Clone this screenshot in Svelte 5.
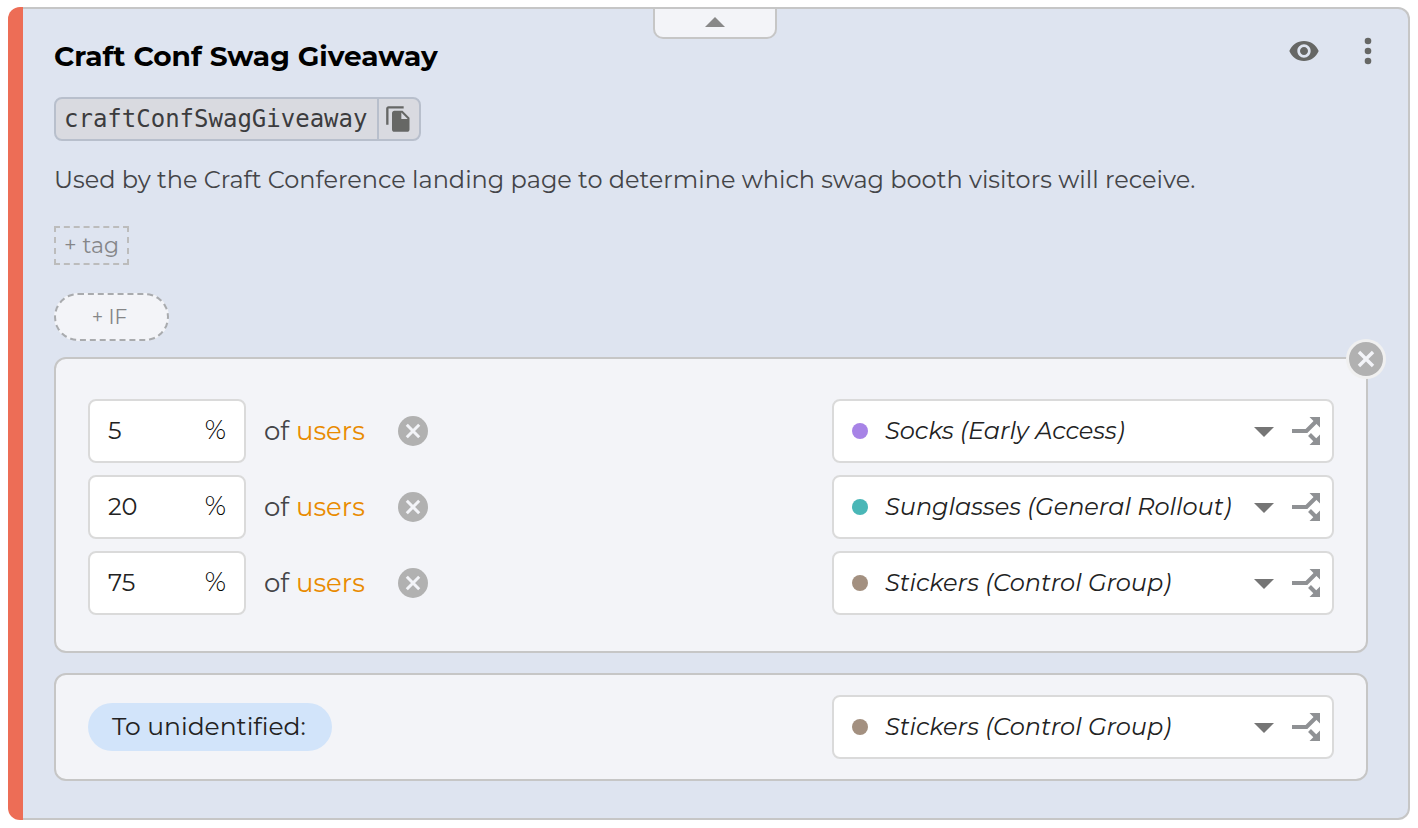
<script>
  const variants = [
    { id: 'socks', name: 'Socks (Early Access)', color: '#a783e6' },
    { id: 'sunglasses', name: 'Sunglasses (General Rollout)', color: '#4ab7b7' },
    { id: 'stickers', name: 'Stickers (Control Group)', color: '#a39080' },
  ];

  let open = $state(true);
  let hasRule = $state(true);
  let fallback = $state('stickers');
  let splits = $state([
    { percent: '5', variant: 'socks' },
    { percent: '20', variant: 'sunglasses' },
    { percent: '75', variant: 'stickers' },
  ]);

  const colorOf = (id) => variants.find((v) => v.id === id)?.color;
  const removeSplit = (i) => splits.splice(i, 1);
</script>

{#snippet cross()}
  <svg class="cross" viewBox="0 0 30 30" aria-hidden="true">
    <circle cx="15" cy="15" r="15" fill="#b1b1b1" />
    <path d="M8.8 8.8 21.2 21.2M21.2 8.8 8.8 21.2" stroke="#f3f4f8" stroke-width="3" />
  </svg>
{/snippet}

{#snippet picker(value, label, onPick)}
  <div class="picker">
    <span class="dot" style:background={colorOf(value)}></span>
    <select aria-label={label} {value} onchange={(e) => onPick(e.currentTarget.value)}>
      {#each variants as v}
        <option value={v.id}>{v.name}</option>
      {/each}
    </select>
    <button class="split" aria-label="Split variant">
      <svg width="28" height="28" viewBox="0 0 28 28">
        <path d="M0 14H14.5L24 4.5" fill="none" stroke="#8f9194" stroke-width="4" />
        <path d="M17.5 17.5 24 24" stroke="#8f9194" stroke-width="4" />
        <path d="M17.5 0H28V10.5ZM17.5 28H28V17.5Z" fill="#8f9194" />
      </svg>
    </button>
  </div>
{/snippet}

<article class="card">
  <div class="stripe"></div>
  <div class="content">
    <button class="collapse" aria-label="Collapse" aria-expanded={open} onclick={() => (open = !open)}>
      <svg width="20" height="10" viewBox="0 0 20 10"><path d="M0 10 10 0 20 10Z" fill="#888" /></svg>
    </button>

    <header>
      <h2>Craft Conf Swag Giveaway</h2>
      <div class="actions">
        <button aria-label="Watch">
          <svg width="32" height="32" viewBox="0 0 24 24" fill="#666765">
            <path d="M12 4.5C7 4.5 2.73 7.61 1 12c1.73 4.39 6 7.5 11 7.5s9.27-3.11 11-7.5c-1.73-4.39-6-7.5-11-7.5zM12 17c-2.76 0-5-2.24-5-5s2.24-5 5-5 5 2.24 5 5-2.24 5-5 5zm0-8c-1.66 0-3 1.34-3 3s1.34 3 3 3 3-1.34 3-3-1.34-3-3-3z" />
          </svg>
        </button>
        <button aria-label="More">
          <svg width="32" height="32" viewBox="0 0 32 32" fill="#666765">
            <circle cx="16" cy="6" r="3.3" />
            <circle cx="16" cy="16" r="3.3" />
            <circle cx="16" cy="26" r="3.3" />
          </svg>
        </button>
      </div>
    </header>

    <div class="key">
      <code>craftConfSwagGiveaway</code>
      <button aria-label="Copy key">
        <svg width="28" height="28" viewBox="0 0 24 24" fill="#666765">
          <path d="M16 1H3c-1.1 0-2 .9-2 2v14h2V3h13V1zm-1 4l6 6v10c0 1.1-.9 2-2 2H7.99C6.89 23 6 22.1 6 21l.01-14c0-1.1.89-2 1.99-2h7zm-1 7h5.5L14 6.5V12z" />
        </svg>
      </button>
    </div>

    {#if open}
      <p>Used by the Craft Conference landing page to determine which swag booth visitors will receive.</p>
      <button class="add-tag">+ tag</button>
      <button class="add-if">+ IF</button>

      {#if hasRule}
        <section class="panel rules">
          <button class="round close" aria-label="Remove rule" onclick={() => (hasRule = false)}>
            {@render cross()}
          </button>
          {#each splits as split, i}
            <div class="row">
              <label class="percent">
                <input bind:value={split.percent} inputmode="numeric" />
                <span>%</span>
              </label>
              <span class="of">of <a href="#users">users</a></span>
              <button class="round" aria-label="Remove split" onclick={() => removeSplit(i)}>
                {@render cross()}
              </button>
              {@render picker(split.variant, 'Variant', (v) => (split.variant = v))}
            </div>
          {/each}
        </section>
      {/if}

      <section class="panel">
        <div class="row">
          <span class="pill">To unidentified:</span>
          {@render picker(fallback, 'Variant for unidentified users', (v) => (fallback = v))}
        </div>
      </section>
    {/if}
  </div>
</article>

<style>
  :global(body) {
    background: #fff;
  }
  .card {
    display: flex;
    margin: 7px 8px 8px;
    font-family: Montserrat, Inter, sans-serif;
    font-size: 24px;
    color: #222;
  }
  button, input, select {
    font: inherit;
    color: inherit;
    margin: 0;
    padding: 0;
    border: none;
    background: none;
  }
  button {
    cursor: pointer;
  }
  svg {
    display: block;
  }
  .stripe {
    flex: none;
    width: 15px;
    background: #ed6d56;
    border-radius: 12px 0 0 12px;
  }
  .content {
    position: relative;
    flex: 1;
    min-width: 0;
    display: flex;
    flex-direction: column;
    align-items: flex-start;
    padding: 24px 40px 37px 31px;
    background: #dee4f0;
    border: 2px solid #c6c6c6;
    border-left: none;
    border-radius: 0 12px 12px 0;
  }
  .collapse {
    position: absolute;
    top: 0;
    left: calc(50% - 63px);
    width: 124px;
    height: 30px;
    display: flex;
    justify-content: center;
    padding-top: 8px;
    background: #f3f4f8;
    border: 2px solid #c6c6c6;
    border-top: none;
    border-radius: 0 0 10px 10px;
  }
  header {
    align-self: stretch;
    display: flex;
    justify-content: space-between;
    align-items: flex-start;
  }
  h2 {
    margin: 0;
    font-size: 28px;
    font-weight: 700;
    line-height: 46px;
    color: #000;
  }
  .actions {
    display: flex;
    gap: 32px;
    margin: 2px -16px 0 0;
  }
  .key {
    display: flex;
    height: 40px;
    margin-top: 18px;
    background: #d9dae0;
    border: 2px solid #b8bfcc;
    border-radius: 8px;
  }
  .key code {
    padding: 0 10px 0 8px;
    font-family: "DejaVu Sans Mono", monospace;
    font-size: 24px;
    line-height: 40px;
    color: #3c3c3e;
  }
  .key button {
    padding: 0 6px;
    border-left: 2px solid #b8bfcc;
  }
  p {
    margin: 20px 0 0;
    font-size: 24px;
    line-height: 38px;
    color: #444548;
  }
  .add-tag {
    height: 39px;
    margin-top: 27px;
    padding: 0 8px;
    border: 2px dashed #bcbcbc;
    font-size: 22px;
    color: #858688;
  }
  .add-if {
    width: 115px;
    height: 48px;
    margin-top: 28px;
    padding-right: 4px;
    background: #f3f4f8;
    border: 2px dashed #a9abae;
    border-radius: 24px;
    font-size: 20px;
    color: #858688;
  }
  .panel {
    position: relative;
    align-self: stretch;
    margin-top: 20px;
    padding: 20px 32px;
    background: #f3f4f8;
    border: 2px solid #c6c6c6;
    border-radius: 12px;
  }
  .rules {
    display: flex;
    flex-direction: column;
    gap: 12px;
    margin-top: 16px;
    padding: 40px 32px 36px;
  }
  .row {
    display: flex;
    align-items: center;
  }
  .percent {
    box-sizing: border-box;
    display: flex;
    align-items: center;
    width: 158px;
    height: 64px;
    padding: 0 18px 2px;
    background: #fff;
    border: 2px solid #dadada;
    border-radius: 8px;
  }
  .percent input {
    flex: 1;
    min-width: 0;
    outline: none;
  }
  .percent span {
    font-size: 26px;
    font-weight: 300;
    color: #000;
  }
  .of {
    margin: 0 33px 0 18px;
    font-size: 26px;
    color: #444548;
  }
  .of a {
    color: #e98b00;
    text-decoration: none;
  }
  .round .cross {
    width: 30px;
    height: 30px;
  }
  .close {
    position: absolute;
    top: -20px;
    right: -20px;
    padding: 3px;
    background: #f0f0f0;
    border-radius: 50%;
  }
  .close .cross {
    width: 34px;
    height: 34px;
  }
  .picker {
    box-sizing: border-box;
    flex: 0 1 502px;
    display: flex;
    align-items: center;
    height: 64px;
    margin-left: auto;
    padding: 0 12px 0 18px;
    background: #fff;
    border: 2px solid #dadada;
    border-radius: 8px;
  }
  .dot {
    flex: none;
    width: 16px;
    height: 16px;
    border-radius: 50%;
  }
  .picker select {
    flex: 1;
    min-width: 0;
    height: 60px;
    padding: 0 36px 2px 17px;
    appearance: none;
    font-style: italic;
    background: url('data:image/svg+xml,<svg xmlns="http://www.w3.org/2000/svg" width="20" height="10"><path d="M0 0H20L10 10Z" fill="%23757575"/></svg>') no-repeat right 26px;
    outline: none;
  }
  .split {
    margin-left: 18px;
  }
  .pill {
    box-sizing: border-box;
    height: 48px;
    padding: 0 26px 0 24px;
    line-height: 46px;
    font-size: 25px;
    background: #d2e4fa;
    border-radius: 24px;
  }
</style>
